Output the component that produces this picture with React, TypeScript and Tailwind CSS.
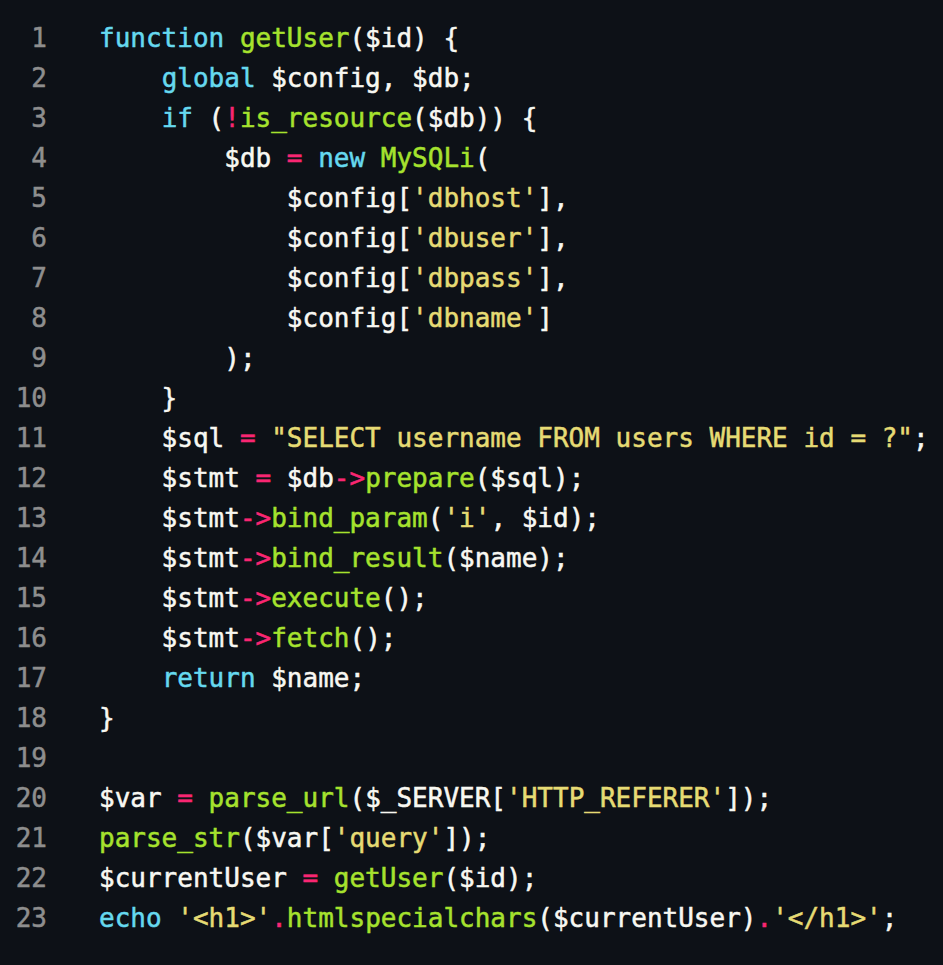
import React from "react";

type Tok = [string, string?];

const C = {
  k: "text-[#66d9ef]",
  f: "text-[#a6e22e]",
  s: "text-[#e6db74]",
  o: "text-[#f92672]",
};

const lines: Tok[][] = [
  [["function", "k"], [" "], ["getUser", "f"], ["($id) {"]],
  [["    "], ["global", "k"], [" $config, $db;"]],
  [["    "], ["if", "k"], [" ("], ["!", "o"], ["is_resource", "f"], ["($db)) {"]],
  [["        $db "], ["=", "o"], [" "], ["new", "k"], [" "], ["MySQLi", "f"], ["("]],
  [["            $config["], ["'dbhost'", "s"], ["],"]],
  [["            $config["], ["'dbuser'", "s"], ["],"]],
  [["            $config["], ["'dbpass'", "s"], ["],"]],
  [["            $config["], ["'dbname'", "s"], ["]"]],
  [["        );"]],
  [["    }"]],
  [["    $sql "], ["=", "o"], [" "], ['"SELECT username FROM users WHERE id = ?"', "s"], [";"]],
  [["    $stmt "], ["=", "o"], [" $db"], ["->", "o"], ["prepare", "f"], ["($sql);"]],
  [["    $stmt"], ["->", "o"], ["bind_param", "f"], ["("], ["'i'", "s"], [", $id);"]],
  [["    $stmt"], ["->", "o"], ["bind_result", "f"], ["($name);"]],
  [["    $stmt"], ["->", "o"], ["execute", "f"], ["();"]],
  [["    $stmt"], ["->", "o"], ["fetch", "f"], ["();"]],
  [["    "], ["return", "k"], [" $name;"]],
  [["}"]],
  [[""]],
  [["$var "], ["=", "o"], [" "], ["parse_url", "f"], ["($_SERVER["], ["'HTTP_REFERER'", "s"], ["]);"]],
  [["parse_str", "f"], ["($var["], ["'query'", "s"], ["]);"]],
  [["$currentUser "], ["=", "o"], [" "], ["getUser", "f"], ["($id);"]],
  [["echo", "k"], [" "], ["'<h1>'", "s"], [".", "o"], ["htmlspecialchars", "f"], ["($currentUser)"], [".", "o"], ["'</h1>'", "s"], [";"]],
];

export default function App() {
  return (
    <div
      className="w-[943px] h-[965px] bg-[#0d1117] text-[#f8f8f2] pt-[18px] overflow-hidden [-webkit-text-stroke:0.5px]"
      style={{ fontFamily: '"DejaVu Sans Mono", "Liberation Mono", monospace' }}
    >
      {lines.map((toks, i) => (
        <div key={i} className="flex text-[26px] leading-[40px] whitespace-pre">
          <div className="w-[47px] text-right text-[#8e8e8e] shrink-0">{i + 1}</div>
          <div className="pl-[52px]">
            {toks.map(([t, c], j) => (
              <span key={j} className={c ? C[c as keyof typeof C] : undefined}>
                {t}
              </span>
            ))}
            {toks.length === 1 && toks[0][0] === "" ? "\u00a0" : null}
          </div>
        </div>
      ))}
    </div>
  );
}
